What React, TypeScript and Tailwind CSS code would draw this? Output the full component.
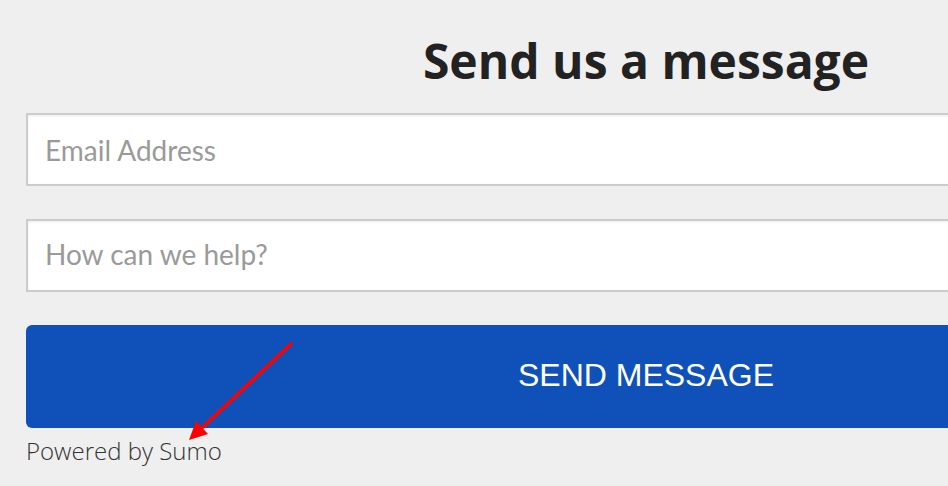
import React from 'react';

export default function App() {
  return (
    <div className="relative w-[948px] h-[486px] overflow-hidden bg-[#efefef]">
      <div className="ml-[26px] w-[1240px] pt-[32px]">
        {/* Heading */}
        <h1 className="text-center font-['Open_Sans',sans-serif] font-bold text-[48px] leading-[58px] text-[#222222]">
          Send us a message
        </h1>

        {/* Form */}
        <form className="mt-[23px] flex flex-col">
          <input
            type="email"
            placeholder="Email Address"
            className="h-[73px] w-full border-2 border-[#cccccc] bg-white pl-[17px] font-['Lato',sans-serif] text-[28px] text-[#333] placeholder:text-[#9a9a9a] shadow-[inset_0_1px_3px_rgba(0,0,0,0.08)] outline-none"
          />
          <input
            type="text"
            placeholder="How can we help?"
            className="mt-[33px] h-[73px] w-full border-2 border-[#cccccc] bg-white pl-[17px] pb-[3px] font-['Lato',sans-serif] text-[28px] text-[#333] placeholder:text-[#9a9a9a] shadow-[inset_0_1px_3px_rgba(0,0,0,0.08)] outline-none"
          />
          <button
            type="button"
            className="mt-[33px] h-[103px] w-full rounded-[6px] bg-[#0f51b8] font-['Liberation_Sans',Arial,sans-serif] text-[32px] text-white pb-[4px]"
          >
            SEND MESSAGE
          </button>
        </form>

        <p className="mt-[7px] font-['Open_Sans',sans-serif] font-light text-[24px] leading-[32px] text-[#333333]">
          Powered by Sumo
        </p>
      </div>

      {/* Annotation arrow */}
      <svg className="absolute inset-0 pointer-events-none" width="948" height="486" viewBox="0 0 948 486">
        <line x1="291" y1="344" x2="203" y2="427" stroke="#ff0000" strokeWidth="3.5" strokeLinecap="round" />
        <polygon points="189,440 208,434 196,421" fill="#ff0000" />
      </svg>
    </div>
  );
}
